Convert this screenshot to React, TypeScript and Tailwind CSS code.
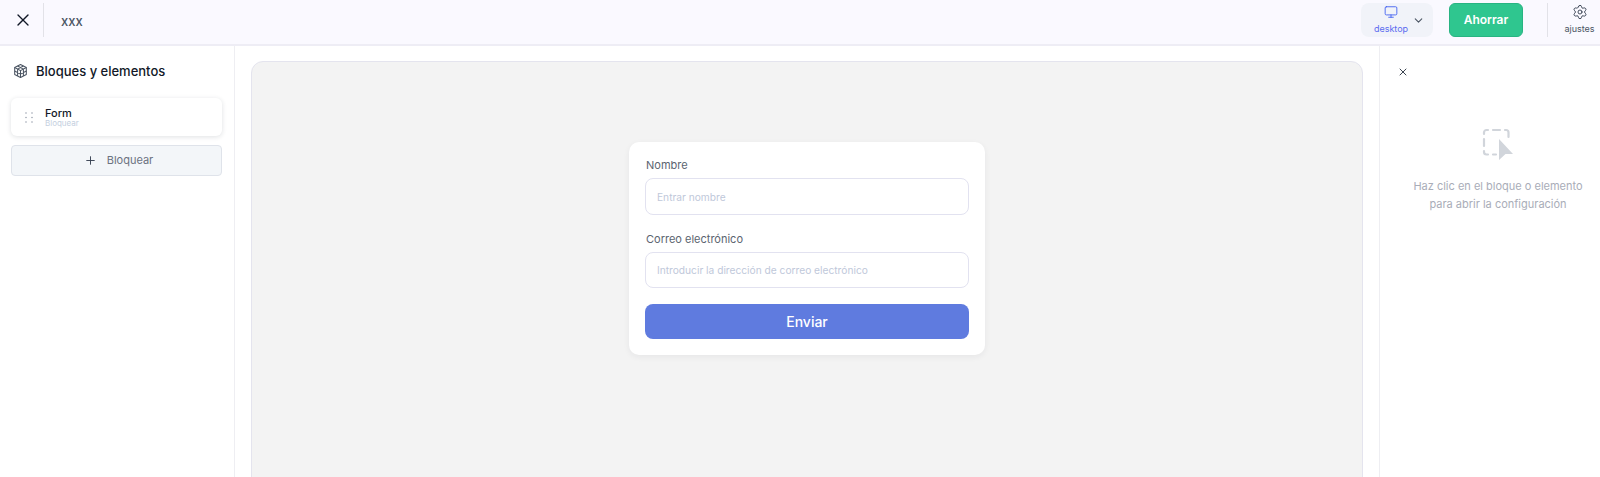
import { ChevronDown, Monitor, Plus, Settings, X } from "lucide-react";

function CubeIcon() {
  return (
    <svg width="15" height="16" viewBox="0 0 16 16" fill="none" stroke="#4b5563" strokeWidth="1.1" strokeLinejoin="round">
      <path d="M8 1 14.2 4.3V11.7L8 15 1.8 11.7V4.3Z" />
      <path d="M1.8 4.3 8 7.6 14.2 4.3M8 7.6V15" />
      <path d="M4.9 2.6 11.1 6M11.1 2.6 4.9 6M4.9 6V13.4M11.1 6V13.4M1.8 8 8 11.3 14.2 8" />
    </svg>
  );
}

function DragDots() {
  return (
    <svg width="8" height="11" viewBox="0 0 8 11" fill="#9ca3af">
      <circle cx="1" cy="1" r="0.8" />
      <circle cx="7" cy="1" r="0.8" />
      <circle cx="1" cy="5.5" r="0.8" />
      <circle cx="7" cy="5.5" r="0.8" />
      <circle cx="1" cy="10" r="0.8" />
      <circle cx="7" cy="10" r="0.8" />
    </svg>
  );
}

function SelectHint() {
  return (
    <svg width="32" height="32" viewBox="0 0 32 32" fill="none">
      <path
        d="M6 2H4.5A2.5 2.5 0 0 0 2 4.5V6M11 2H18M23 2H24A2.5 2.5 0 0 1 26.5 4.5V9M2 11V18M2 23V24A2.5 2.5 0 0 0 4.5 26.5H6M11 26.5H14"
        stroke="#d1d5db"
        strokeWidth="2.2"
        strokeLinecap="round"
      />
      <path d="M17 11 31 26H23.5L17 32Z" fill="#d1d5db" />
    </svg>
  );
}

export default function App() {
  return (
    <div className="h-screen flex flex-col overflow-hidden bg-white font-['Inter',sans-serif]">
      {/* Top bar */}
      <header className="h-[46px] shrink-0 flex items-start bg-[#faf9ff] border-b-2 border-[#eeedf5]">
        <div className="w-[44px] h-[34px] mt-[3px] flex items-center justify-center border-r border-[#e2e2e8]">
          <X size={20} strokeWidth={1.6} className="text-[#111827] translate-x-px" />
        </div>
        <span className="ml-[17px] mt-[13px] text-[13px] leading-4 font-medium text-[#4b5563]">xxx</span>

        <div className="ml-auto flex items-start pt-[3px]">
          <div className="w-[72px] h-[34px] flex items-center bg-[#f1f3f9] rounded-lg pl-[14px]">
            <div className="flex flex-col items-center w-[34px] -translate-x-px">
              <Monitor size={14} strokeWidth={1.5} className="text-[#3f5ef0] -mt-px" />
              <span className="mt-[4px] text-[9px] leading-[12px] font-normal text-[#5b6cf0]">desktop</span>
            </div>
            <ChevronDown size={13} strokeWidth={2} className="ml-[3px] text-[#4b5563]" />
          </div>
          <button className="ml-4 w-[74px] h-[34px] rounded-md bg-[#2fc68f] border border-[#28b482] text-white text-[12px] font-semibold">
            Ahorrar
          </button>
          <div className="ml-6 w-[53px] h-[34px] border-l border-[#e2e2e8] flex flex-col items-center pl-[11px]">
            <Settings size={16} strokeWidth={1.4} className="text-[#374151] mt-px" />
            <span className="mt-[3px] text-[9px] leading-[12px] font-normal text-[#4b5563]">ajustes</span>
          </div>
        </div>
      </header>

      <div className="flex-1 min-h-0 flex">
        {/* Blocks sidebar */}
        <aside className="w-[235px] shrink-0 border-r border-[#eeeef2] pl-[11px] pr-[12px]">
          <div className="flex items-center gap-[8px] h-[18px] mt-[16px] pl-[2px]">
            <CubeIcon />
            <h2 className="text-[13px] leading-[18px] font-medium text-[#111827]">Bloques y elementos</h2>
          </div>
          <div className="mt-[18px] h-[38px] flex items-center rounded-md bg-white shadow-[0_1px_5px_rgba(30,41,59,0.14)]">
            <div className="ml-[14px]">
              <DragDots />
            </div>
            <div className="ml-[12px] flex flex-col">
              <span className="text-[11px] leading-[12px] font-medium text-[#111827]">Form</span>
              <span className="text-[8px] leading-[9px] text-[#c4cfe0]">Bloquear</span>
            </div>
          </div>
          <button className="mt-[9px] w-full h-[31px] flex items-center justify-center gap-[10px] pl-[4px] rounded-[4px] bg-[#f3f6f9] border border-[#dfe3ea] text-[11px] font-normal text-[#6b7280]">
            <Plus size={13} strokeWidth={1.75} className="text-[#374151]" />
            Bloquear
          </button>
        </aside>

        {/* Canvas */}
        <main className="flex-1 min-w-0 pl-4 pr-4 pt-[15px]">
          <div className="h-[600px] flex justify-center pt-[80px] bg-[#f3f3f3] border border-[#e4e4ee] rounded-xl">
            <form className="w-[356px] h-[213px] bg-white rounded-[10px] px-4 pt-4 shadow-[0_2px_6px_rgba(30,41,59,0.06)]">
              <label className="block ml-px text-[11px] leading-[14px] font-normal text-[#5b6470]">Nombre</label>
              <input
                placeholder="Entrar nombre"
                className="mt-[6px] w-full h-[37px] px-[11px] rounded-lg border border-[#e2e2f0] text-[10.2px] placeholder:text-[#c0c8da] outline-none"
              />
              <label className="block ml-px mt-[17px] text-[11px] leading-[14px] font-normal text-[#5b6470]">Correo electrónico</label>
              <input
                placeholder="Introducir la dirección de correo electrónico"
                className="mt-[6px] w-full h-[36px] px-[11px] rounded-lg border border-[#e2e2f0] text-[10.2px] placeholder:text-[#c0c8da] outline-none"
              />
              <button type="button" className="mt-4 w-full h-[35px] rounded-lg bg-[#5f7bdf] text-white text-[14px] font-medium">
                Enviar
              </button>
            </form>
          </div>
        </main>

        {/* Settings panel */}
        <aside className="w-[221px] shrink-0 border-l border-[#eeeef2]">
          <X size={12} strokeWidth={1.75} className="ml-[17px] mt-[20px] text-[#1f2937]" />
          <div className="mt-[50px] pl-[16px] flex flex-col items-center">
            <SelectHint />
            <p className="mt-[17px] text-center text-[11px] leading-[18px] text-[#a9adb8]">
              Haz clic en el bloque o elemento
              <br />
              para abrir la configuración
            </p>
          </div>
        </aside>
      </div>
    </div>
  );
}
